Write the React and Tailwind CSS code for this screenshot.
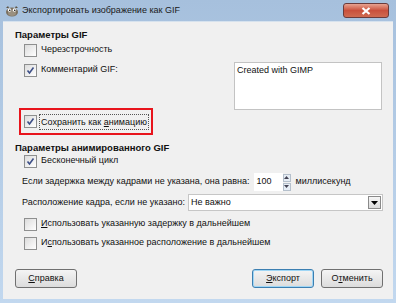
import { useState } from "react";

function CheckBox({ checked, label, focus }) {
  return (
    <div className="flex h-[14px] items-center gap-[2px] whitespace-nowrap">
      <span className="flex h-[13px] w-[13px] shrink-0 items-center justify-center border border-[#8e8f8f] bg-gradient-to-br from-[#dcdcdc] to-[#ffffff]">
        {checked && (
          <svg width="9" height="9" viewBox="0 0 9 9">
            <path d="M1.5 4.5 L3.5 7 L7.5 1.5" fill="none" stroke="#3d4f87" strokeWidth="1.6" />
          </svg>
        )}
      </span>
      <span className={focus ? "border border-dotted border-[#555] px-[1px] leading-[14px]" : "px-[2px]"}>
        {label}
      </span>
    </div>
  );
}

function Btn({ children, focused }) {
  return (
    <button
      className={
        "h-[19px] w-[62px] rounded-[3px] border bg-gradient-to-b from-[#f4f4f4] to-[#dcdcdc] text-[9px] leading-none " +
        (focused ? "border-[#3c7fb1] shadow-[inset_0_0_0_1px_#9fd6f5]" : "border-[#707070]")
      }
    >
      {children}
    </button>
  );
}

export default function App() {
  const [delay] = useState("100");
  return (
    <div
      className="flex h-[303px] w-[396px] flex-col whitespace-nowrap bg-gradient-to-b from-[#a6c0dd] to-[#c2d8ef] text-[9px] text-[#111]"
      style={{ fontFamily: '"Liberation Sans", Arial, sans-serif' }}
    >
      {/* title bar */}
      <div className="flex h-[21px] shrink-0 items-center pl-[5px] pr-[7px]">
        <svg width="14" height="12" viewBox="0 0 14 12" className="mr-[3px]">
          <ellipse cx="7" cy="7" rx="6" ry="4.5" fill="#7a6f5f" />
          <ellipse cx="7" cy="8" rx="4" ry="3" fill="#9a9080" />
          <circle cx="4.5" cy="5" r="1.8" fill="#fff" />
          <circle cx="9.5" cy="5" r="1.8" fill="#fff" />
          <circle cx="4.8" cy="5.2" r="0.8" fill="#000" />
          <circle cx="9.8" cy="5.2" r="0.8" fill="#000" />
          <path d="M1 3 L3 1 L4 3 Z M13 3 L11 1 L10 3 Z" fill="#5a5040" />
        </svg>
        <span className="text-[9px] text-[#1a1a1a]">Экспортировать изображение как GIF</span>
        <div className="ml-auto flex h-[15px] w-[46px] items-center justify-center rounded-[3px] border border-[#6b3b3b] bg-gradient-to-b from-[#e7a291] via-[#c9503c] to-[#cf6a50]">
          <svg width="10" height="8" viewBox="0 0 10 8">
            <path d="M1.5 1 L8.5 7 M8.5 1 L1.5 7" stroke="#fff" strokeWidth="2.2" />
          </svg>
        </div>
      </div>

      {/* client area */}
      <div className="mx-[3px] mb-[4px] flex flex-1 flex-col border-t border-[#d6e2ee] bg-[#f0f0f0] pl-[12px] pr-[10px]">
        <div className="mt-[6px] h-[14px] text-[9.5px] font-bold leading-[14px]">Параметры GIF</div>
        <div className="ml-[9px]">
          <div className="mt-[1px]">
            <CheckBox label="Черезстрочность" />
          </div>
          <div className="flex">
            <div className="mt-[6px]">
              <CheckBox checked label="Комментарий GIF:" />
            </div>
            <div className="ml-auto mr-[1px] mt-[5px] h-[48px] w-[148px] border border-[#c3c3c3] bg-white px-[2px] leading-[14px]">
              Created with GIMP
            </div>
          </div>
        </div>
        <div className="-mt-[2px] ml-[4px] flex h-[27px] w-[134px] items-center border-2 border-[#e8141c] pl-[3px]">
          <CheckBox
            checked
            focus
            label={
              <>
                Сохранить как <u>а</u>нимацию
              </>
            }
          />
        </div>
        <div className="mt-[6px] h-[14px] text-[9.5px] font-bold leading-[14px]">Параметры анимированного GIF</div>
        <div className="-mt-[1px] ml-[9px]">
          <CheckBox checked label="Бесконечный цикл" />
        </div>
        <div className="ml-[7px] mt-[5px] flex h-[18px] items-center">
          <span>Если задержка между кадрами не указана, она равна:</span>
          <div className="ml-[4px] flex h-[18px] items-center bg-white">
            <span className="w-[29px] pl-[3px]">{delay}</span>
            <div className="flex h-[18px] w-[8px] flex-col justify-center gap-[1px] bg-[#f0f0f0]">
              <span className="flex h-[8px] items-center justify-center border border-[#b5c0cc] bg-[#e6edf5]">
                <svg width="5" height="3" viewBox="0 0 5 3"><path d="M0 3 L2.5 0 L5 3 Z" fill="#445" /></svg>
              </span>
              <span className="flex h-[8px] items-center justify-center border border-[#b5c0cc] bg-[#e6edf5]">
                <svg width="5" height="3" viewBox="0 0 5 3"><path d="M0 0 L2.5 3 L5 0 Z" fill="#445" /></svg>
              </span>
            </div>
          </div>
          <span className="ml-[5px]">миллисекунд</span>
        </div>
        <div className="ml-[7px] mt-[3px] flex h-[17px] items-center">
          <span>Расположение кадра, если не указано:</span>
          <div className="ml-auto flex h-[17px] w-[195px] items-center border border-[#c6c6c6] bg-white pl-[2px]">
            <span>Не важно</span>
            <span className="ml-auto mr-[1px] flex h-[13px] w-[13px] items-center justify-center border border-[#8a8a8a] bg-gradient-to-b from-[#f6f6f6] to-[#dadada]">
              <svg width="7" height="4" viewBox="0 0 7 4"><path d="M0 0 L3.5 4 L7 0 Z" fill="#000" /></svg>
            </span>
          </div>
        </div>
        <div className="ml-[9px] mt-[6px] flex flex-col gap-[5px]">
          <CheckBox
            label={
              <>
                <u>И</u>спользовать указанную задержку в дальнейшем
              </>
            }
          />
          <CheckBox
            label={
              <>
                И<u>с</u>пользовать указанное расположение в дальнейшем
              </>
            }
          />
        </div>
        <div className="mb-[11px] mt-auto flex">
          <Btn>
            <u>С</u>правка
          </Btn>
          <div className="ml-auto flex gap-[7px]">
            <Btn focused>
              <u>Э</u>кспорт
            </Btn>
            <Btn>
              О<u>т</u>менить
            </Btn>
          </div>
        </div>
      </div>
    </div>
  );
}
